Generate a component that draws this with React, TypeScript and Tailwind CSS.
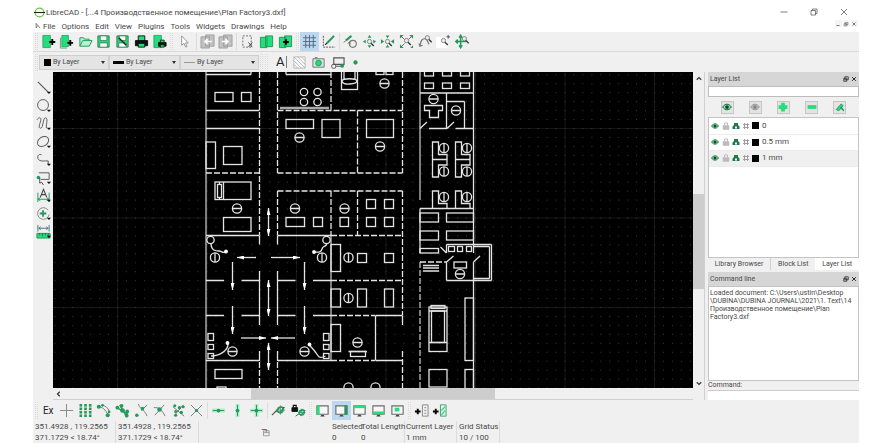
import { useState } from "react";
import type { ReactNode } from "react";
import clsx from "clsx";

const G = "#25dd7c";
const D = "#23995a";
const K = "#555";

// ---------- icons (16x16 grid) ----------

function Icon({ children, className = "size-[15px]" }: { children: ReactNode; className?: string }) {
  return (
    <svg viewBox="0 0 16 16" fill="none" stroke={K} className={clsx("block shrink-0", className)} aria-hidden="true">
      {children}
    </svg>
  );
}

const plus = (x: number, y: number, s = 3) => (
  <path d={`M${x - s} ${y}H${x + s}M${x} ${y - s}V${y + s}`} stroke="#000" strokeWidth="2" />
);
const lens = (x: number, y: number) => (
  <>
    <circle cx={x} cy={y} r="2.3" fill="#e6eeea" stroke="#777" strokeWidth=".9" />
    <path d={`M${x + 1.6} ${y + 1.8}L${x + 4.6} ${y + 4.8}`} stroke="#333" strokeWidth="1.4" />
  </>
);
const dot = (x: number, y: number, r = 1.8) => <circle cx={x} cy={y} r={r} fill={D} stroke="none" />;

const icons: Record<string, ReactNode> = {
  New: <><path d="M2 1.500h8v13H2z" fill={G} stroke={D} strokeWidth=".8" />{plus(12, 8.5, 3.2)}</>,
  "New from template": <><path d="M3 1.500h7v12H3z" fill={G} stroke={D} strokeWidth=".8" /><path d="M1.500 4v11h7" stroke={D} strokeWidth=".8" />{plus(12, 9.5, 3)}</>,
  Open: <path d="M2 13V4h4l1 1.500h5V7M2 13l3-6h10l-3 6z" fill="#b7f3d2" stroke={D} />,
  Save: <><path d="M2 2h12v12H2z" fill={G} stroke="#3b7657" /><path d="M4.500 2h7v5h-7zM4 9.500h8V14H4z" fill="#f3fff8" stroke="#3b7657" strokeWidth=".8" /></>,
  "Save as": <><path d="M2 2h12v12H2z" fill={G} stroke="#3b7657" /><path d="M4.500 2h7v5h-7zM4 9.500h8V14H4z" fill="#f3fff8" stroke="#3b7657" strokeWidth=".8" /><path d="M4 4l8 8" stroke="#222" strokeWidth="1.500" /></>,
  Print: <><path d="M4.500 2h7v5h-7z" fill={G} stroke="#111" /><path d="M1.500 7h13v5.500h-13z" fill="#111" stroke="#111" /><path d="M4.500 10h7v4h-7z" fill={G} stroke="#111" /></>,
  "Print preview": <><path d="M2 1.500h8v13H2z" fill={G} stroke={D} strokeWidth=".8" /><path d="M7 9h8v4H7z" fill="#111" stroke="#111" /><path d="M9 6.500h4V9H9zM9 11.500h4V14H9z" fill={G} stroke="#111" strokeWidth=".8" /></>,
  Select: <path d="M5 2v10l2.500-2 1.700 4 1.600-.8L9 9.500h3z" fill="#fff" stroke="#888" strokeWidth=".9" />,
  Undo: <><path d="M1 3h9v12H1zM6 1h9v12H6z" fill="#c2c2c2" stroke="#999" strokeWidth=".9" /><path d="M12.500 8H6M8 5.500L5.500 8 8 10.500" stroke="#fff" strokeWidth="1.800" /></>,
  Redo: <><path d="M1 3h9v12H1zM6 1h9v12H6z" fill="#c2c2c2" stroke="#999" strokeWidth=".9" /><path d="M4 8h6M8 5.500L10.500 8 8 10.500" stroke="#fff" strokeWidth="1.800" /></>,
  Cut: <><path d="M3 2h9v12H3z" strokeDasharray="2 1.500" stroke="#666" /><path d="M9 9l4 5M13 9l-4 5" stroke="#444" /></>,
  Copy: <path d="M1.500 3.500h7v11h-7zM7 2h7.500v11.500H7z" fill={G} stroke={D} />,
  Paste: <><path d="M1.500 3.500h7v11h-7zM7 2h7.500v11.500H7z" fill={G} stroke={D} />{plus(8.5, 8.5, 3)}</>,
  Grid: <path d="M4 1v14M8 1v14M12 1v14M1 4h14M1 8h14M1 12h14" stroke="#4b6076" strokeWidth=".9" />,
  Draft: <><path d="M2.500 2v12H15" stroke="#555" strokeDasharray="2 1" /><path d="M6.500 9.500L14 2" stroke={D} strokeWidth="2.200" /><path d="M4.500 11.500l2-2" stroke="#222" strokeWidth="1.300" /></>,
  Redraw: <><path d="M3 7l6-5" stroke={D} strokeWidth="2.200" /><path d="M1 9l2-2" /><circle cx="10.500" cy="10.500" r="3.700" stroke="#777" strokeWidth="1.200" /><path d="M5 10l2-1.500L8 11" stroke="#777" /></>,
  "Zoom in": <><path d="M8 1l2 3H6zM8 15l2-3H6zM1 8l3-2v4zM15 8l-3-2v4z" fill={D} stroke="none" />{lens(8, 8)}</>,
  "Zoom out": <><path d="M8 4.500l2-3H6zM8 11.500l2 3H6zM4.500 8L1 5.500v5zM11.500 8L15 5.500v5z" fill={D} stroke="none" />{lens(8, 8)}</>,
  "Auto zoom": <><path d="M2 2l4 4M14 2l-4 4M2 14l4-4" stroke="#666" /><path d="M1 1h4L1 5zM15 1v4l-4-4zM1 15v-4l4 4zM15 15h-3l3-3z" fill={D} stroke="none" />{lens(8, 7)}</>,
  "Previous view": <><path d="M2 13c1-4 1-8 5-8 4 0 3 5 5 6M1 10l1 3 3-1" stroke="#777" strokeWidth="1.200" />{lens(10, 4)}</>,
  "Window zoom": <><path d="M0 3h12v12H0z" fill="#fff" stroke="none" /><path d="M13 1v4M11 3h4" stroke="#333" strokeWidth=".8" />{lens(8, 7)}</>,
  Pan: <><path d="M6 2v12M1 8h11M4.500 4L6 1.500 7.500 4M4.500 12L6 14.500 7.500 12M3 6L1 8l2 2" stroke={D} strokeWidth="1.700" />{lens(10, 5)}</>,
  Hatch: <><path d="M2 2h12v12H2z" fill="#fafafa" stroke="#bbb" /><path d="M2 2l12 12M2 6l8 8M2 10l4 4M6 2l8 8M10 2l4 4" stroke="#999" strokeWidth=".7" /></>,
  Image: <><path d="M2 4h12v9H2z" fill="#d6e5dd" stroke="#777" /><circle cx="8" cy="8.500" r="3" fill={G} stroke={D} /><path d="M4 3h3" /></>,
  Block: <><path d="M4 3h11v7H4z" strokeWidth="1.200" /><circle cx="4" cy="12" r="2.300" />{dot(13, 11.5, 2)}<path d="M6 12h6" /></>,
  Point: dot(8, 8, 2.3),
  Line: <path d="M2 2l11 11" strokeWidth="1.200" />,
  Circle: <circle cx="7.500" cy="7.500" r="5.800" />,
  Curve: <path d="M1 4c2-3 5-3 4 1s-3 8 0 8 2-11 5-11 1 5 1 11" />,
  Ellipse: <ellipse cx="7.500" cy="8" rx="6.500" ry="4.800" transform="rotate(-35 7.500 8)" />,
  Polyline: <path d="M6 3C2 1 0 7 4 9c2 1 5 .500 9 .500V13" />,
  Modify: <><path d="M3 3h11v7H4" />{dot(2.5, 8)}<path d="M4 8v6l2-1 2 3" stroke="#444" fill="#fff" /></>,
  Dimension: <><path d="M2 5v10M14 5v10M2 12h12M4.500 10.500L2 12l2.500 1.500M11.500 10.500L14 12l-2.500 1.500" stroke={D} /><path d="M4.500 10L8 1.500l3.500 8.500M6 7h4" stroke="#444" strokeWidth="1.200" /></>,
  "Modify entity": <><path d="M13 4.500A6.200 6.200 0 1 0 14 9" stroke="#888" /><path d="M7.500 4.500v7M4 8h7" stroke={D} strokeWidth="1.900" /></>,
  Measure: <><path d="M2 1v7M14 1v7M3 4.500h10M5 3L3 4.500 5 6M11 3l2 1.500L11 6" stroke="#477" /><path d="M1 10h14v5H1z" fill={G} stroke={D} /><path d="M4 10v2M7 10v3M10 10v2M13 10v3" stroke="#143" strokeWidth=".7" /></>,
  "Free snap": <path d="M8 1v14M1 8h14" stroke="#888" />,
  "Snap grid": <>{[2.5, 6.2, 9.9, 13.6].map((y) => [3, 8, 13].map((x) => <rect key={`${x}-${y}`} x={x - 1.4} y={y - 1.4} width="2.800" height="2.800" fill={D} stroke="none" />))}</>,
  "Snap endpoint": <><path d="M2 4c5 0 8 3 11 9M6 2c4 1 7 3 8 7" stroke="#777" />{dot(3, 4, 2.2)}{dot(12.5, 13, 2.2)}{dot(7, 2.5, 1.4)}{dot(14, 9.5, 1.4)}</>,
  "Snap entity": <><path d="M2 5l12 7M5 2l7 12" stroke={D} strokeWidth="1.500" />{dot(2.5, 5, 2)}{dot(7, 3, 2)}{dot(8, 8, 2.5)}{dot(13, 9, 2)}{dot(12.5, 13.5, 2)}</>,
  "Snap center": <><path d="M5 1c0 5 5 4 9 13M14 2L8 8" stroke="#777" />{dot(3, 13, 1.9)}{dot(9, 6, 1.9)}</>,
  "Snap middle": <><path d="M2 5c5-1 9 3 12 9M13 2L3 13" stroke="#777" />{dot(8, 7, 2.4)}</>,
  "Snap distance": <><path d="M2 4l12 10M13 2L3 14" stroke="#777" />{dot(4, 3, 1.6)}{dot(9, 5, 1.8)}{dot(13, 4, 1.6)}{dot(5, 9, 1.6)}{dot(11, 10, 1.8)}{dot(5, 13, 1.6)}</>,
  "Snap intersection": <><path d="M2 2l12 12M14 2L2 14" stroke="#777" />{dot(8, 8, 1.7)}</>,
  "Restrict horizontal": <><path d="M1 8h14" stroke="#a5eec6" strokeWidth="4" /><path d="M2 8h12" stroke={D} />{dot(8, 8, 2)}</>,
  "Restrict vertical": <><path d="M8 1v14" stroke="#a5eec6" strokeWidth="4" /><path d="M8 2v12" stroke={D} />{dot(8, 8, 2)}</>,
  "Restrict orthogonal": <><path d="M1 8h14M8 1v14" stroke="#a5eec6" strokeWidth="4" /><path d="M2 8h12M8 2v12" stroke={D} />{dot(8, 8, 2)}</>,
  "Set relative zero": <><path d="M1 13l5-5 4-4 4 1-4 5-4-1" stroke="#555" strokeWidth="1.200" /><circle cx="10" cy="7.500" r="3" stroke={D} strokeWidth="1.300" /><path d="M10 2.500v10M5 7.500h10" stroke={D} strokeWidth=".8" /></>,
  "Lock relative zero": <><path d="M1 5h6v4H1z" fill="#111" stroke="#111" /><path d="M2.500 5V2.500h3V5" stroke="#111" strokeWidth="1.300" /><path d="M5 14l4-3 3-4 3 1-4 5-3-1" stroke="#555" /><circle cx="11.500" cy="10" r="2.700" stroke={D} strokeWidth="1.300" /><path d="M11.500 6v8M7.500 10h8" stroke={D} strokeWidth=".8" /></>,
};

const screen = (fill: ReactNode) => (
  <><path d="M2 3h12v9H2z" fill="#f7f7f7" stroke="#6b6b6b" strokeWidth="1.200" />{fill}<path d="M5.500 14.500h5L9 12.500H7z" fill="#444" stroke="none" /></>
);
icons["Left dock"] = screen(<path d="M2 2.500h3v10H2z" fill={G} stroke="none" />);
icons["Right dock"] = screen(<path d="M11 2.500h3v10h-3z" fill={D} stroke="none" />);
icons["Top dock"] = screen(<path d="M2 2.500h12v3H2z" fill={G} stroke="none" />);
icons["Bottom dock"] = screen(<path d="M2 9h12v3H2z" fill={G} stroke="none" />);
icons["Floating dock"] = screen(<path d="M5 5h5v4H5z" fill={G} stroke="none" />);
icons["Add list"] = <>{plus(4, 9, 3)}<path d="M9 2h6v12H9zM11 5h2M11 8h2M11 11h2" stroke="#888" /></>;
icons["Add toolbar"] = <>{plus(4, 9, 3)}<path d="M9 2h6v12H9z" stroke={D} strokeWidth=".9" /><path d="M10 8l4-4M10 13l4-5" stroke={G} strokeWidth="1.300" /></>;

function Tool({ name, active, children }: { name: string; active?: boolean; children?: ReactNode }) {
  return (
    <button
      type="button"
      title={name}
      aria-label={name}
      className={clsx("flex h-[19px] items-center justify-center", active ? "bg-[#bcd8f0]" : "hover:bg-[#dfe9f2]")}
    >
      {children ?? <Icon>{icons[name]}</Icon>}
    </button>
  );
}

function Group({ names, active, className }: { names: string[]; active?: string; className: string }) {
  return (
    <div className={clsx("grid shrink-0 auto-cols-fr grid-flow-col", className)}>
      {names.map((n) => (
        <Tool key={n} name={n} active={n === active}>
          {n === "Ex" ? <span className="text-[10px] text-[#222]">Ex</span> : undefined}
        </Tool>
      ))}
    </div>
  );
}

const Handle = () => <span className="mx-px h-[17px] w-[3px] shrink-0 border-x border-dotted border-[#dadada]" />;
const Sep = () => <span className="mx-px h-[17px] w-px shrink-0 bg-[#dcdcdc]" />;

function PenSelect({ label, className, swatch }: { label: string; className: string; swatch: string }) {
  return (
    <label className={clsx("flex h-[15px] shrink-0 items-center border border-[#cfcfcf] bg-[#e4e4e4] pl-[3px]", className)}>
      <span className={clsx("shrink-0", swatch)} />
      <select aria-label={label} className="min-w-0 flex-1 appearance-none bg-transparent pl-[2px] text-[7px] leading-[12px] outline-none">
        <option>By Layer</option>
      </select>
      <svg viewBox="0 0 4 3" className="mr-[3px] h-[3px] w-[4px]"><path d="M0 0h4L2 3z" fill="#333" /></svg>
    </label>
  );
}

// ---------- drawing ----------

// [x1, y1, x2, y2]
const walls = [
  [259.5, 235.5, 259.5, 244.5], [277.5, 235.5, 277.5, 244.5], [206, 110.5, 259.5, 110.5], [206, 128.5, 259.5, 128.5],
  [206, 235.5, 259.5, 235.5], [277.5, 235.5, 331, 235.5], [259.5, 271, 259.5, 325], [277.5, 271, 277.5, 325],
  [259.5, 351, 259.5, 361], [277.5, 351, 277.5, 361], [206, 360.5, 259.5, 360.5], [277.5, 360.5, 331, 360.5],
  [206, 280.5, 224, 280.5], [241.5, 280.5, 259.5, 280.5], [277.5, 280.5, 295.5, 280.5], [313, 280.5, 331, 280.5],
  [206, 315.5, 224, 315.5], [241.5, 315.5, 259.5, 315.5], [277.5, 315.5, 295.5, 315.5], [313, 315.5, 331, 315.5],
  [206, 74.5, 251, 74.5], [251, 72, 251, 74.5], [286, 74.5, 331, 74.5], [286, 72, 286, 74.5], [223.5, 182, 223.5, 199.5],
  [375.5, 315.5, 402.5, 315.5], [375.5, 315.5, 375.5, 360.5], [375.5, 360.5, 402.5, 360.5], [402.5, 315.5, 402.5, 325],
  [473.5, 72, 473.5, 253], [473.5, 262, 473.5, 388], [420, 93, 473.5, 93], [446.5, 93, 446.5, 128.5],
  [446.5, 101.5, 464.5, 101.5], [464.5, 101.5, 464.5, 128.5], [420, 128.5, 427, 122], [429, 128.5, 447, 128.5],
  [447, 128.5, 454, 122], [455.5, 128.5, 473.5, 128.5], [420, 208.5, 473.5, 208.5], [420, 208.5, 420, 253],
  [440.5, 247, 446.5, 253], [446.5, 262, 453.5, 256], [473.5, 262, 480, 256], [473.5, 246.5, 489.5, 246.5],
  [489.5, 246.5, 489.5, 278.5], [489.5, 278.5, 473.5, 278.5], [446.5, 244.5, 491.5, 244.5], [491.5, 244.5, 491.5, 280.5],
  [446.5, 280.5, 491.5, 280.5], [446.5, 244.5, 446.5, 253], [446.5, 262, 446.5, 280.5],
  [423, 265.5, 439, 265.5], [423, 268, 439, 268], [423, 271, 439, 271],
  [429, 311, 447, 311], [429, 342.5, 447, 342.5], [348.5, 351.5, 367, 351.5], [219.5, 182, 219.5, 185], [219.5, 197, 219.5, 199],
];

const dashed = [
  [259.5, 72, 259.5, 235], [277.5, 72, 277.5, 173], [277.5, 191, 277.5, 235], [206, 173, 259.5, 173],
  [277.5, 110.5, 402.5, 110.5], [277.5, 173, 402.5, 173], [277.5, 191, 402.5, 191], [331, 72, 331, 110.5],
  [357.5, 110.5, 357.5, 173], [402.5, 72, 402.5, 173], [402.5, 191, 402.5, 315], [331, 191, 331, 235], [357.5, 191, 357.5, 235],
  [331, 235.5, 402.5, 235.5], [331, 280.5, 402.5, 280.5], [331, 315.5, 375, 315.5], [331, 360.5, 375, 360.5],
  [402.5, 351, 402.5, 388], [259.5, 362, 259.5, 388], [277.5, 362, 277.5, 388], [420, 262, 446.5, 262],
];

// left, top, right, bottom
const boxes = [
  [215, 92.5, 233, 101.5], [241.5, 92.5, 251, 101.5], [206, 142, 215.5, 168.5], [223.5, 146.5, 242, 164.5],
  [215, 182, 251, 199.5], [217.5, 184.5, 221.5, 197.5], [223.5, 217.5, 251, 231.5], [341.5, 70, 357.5, 89.5],
  [286, 119.5, 313.5, 128.5], [322, 119.5, 340, 137.5], [366.5, 119.5, 393.5, 137.5],
  [286, 217.5, 304.5, 226.5], [313.5, 217.5, 322.5, 226.5], [340, 217.5, 348.5, 226.5],
  [366.5, 199.5, 375.5, 208.5], [384.5, 199.5, 393.5, 208.5], [366.5, 217.5, 375.5, 226.5], [384.5, 217.5, 393.5, 226.5],
  [376, 70, 384, 74.5], [386, 70, 393, 74.5],
  [424.5, 70, 433.5, 76], [442.5, 70, 451.5, 76], [460.5, 70, 469.5, 76],
  [424.5, 83, 433.5, 88.5], [442.5, 83, 451.5, 88.5], [460.5, 83, 469.5, 88.5],
  [420, 213, 438.5, 222], [446.5, 213, 473.5, 222], [420, 231, 438.5, 240], [446.5, 231, 473.5, 240], [420, 248.5, 438.5, 253],
  [448.5, 246.5, 454.5, 251.5], [457.5, 246.5, 462.5, 251.5], [466.5, 246.5, 471.5, 251.5], [454, 262, 466.5, 268],
  [429, 307, 447, 351.5], [431.5, 311, 444.5, 342.5], [431, 305.5, 445, 308.5],
  [465, 298, 473.5, 360.5], [465, 369.5, 473.5, 390], [429, 369.5, 447, 387],
  [331, 244.5, 340.5, 271.5], [331, 289, 340.5, 307], [331, 324.5, 340.5, 351.5],
  [357.5, 253.5, 366.5, 262.5], [384.5, 253.5, 393.5, 262.5], [357.5, 289, 366.5, 307], [384.5, 289, 393.5, 307],
  [350.5, 351.5, 365.5, 356.5], [215, 369.5, 242, 378.5], [217, 387, 226, 390],
  [208, 333.5, 213.5, 340.5], [208, 344.5, 213.5, 349.5], [208, 353.5, 213.5, 358.5],
  [323.5, 333.5, 329, 340.5], [323.5, 344.5, 329, 349.5], [323.5, 353.5, 329, 358.5],
];

const seats = [
  [237, 208.5], [299.5, 137.5], [295, 208.5], [344.5, 208.5], [384.5, 83.5], [380, 146.5], [433.5, 99], [456, 110.5],
  [460, 274], [357.5, 342.5], [232.5, 351.5], [304.5, 351.5],
];
const seatsV = [
  [444, 148], [467, 148], [444, 171.5], [467, 171.5], [444, 197], [467, 197], [215, 257.5], [322, 257.5], [348.5, 257.5], [348.5, 298],
];
const rings = [[304, 92], [317.5, 92], [304, 102], [317.5, 102], [210.5, 240], [326.5, 240], [348.5, 387.5], [375.5, 387.5]];

const arrows = [
  [256, 257.5, 237, 257.5], [271, 257.5, 300, 257.5], [232.5, 262, 232.5, 290], [304.5, 262, 304.5, 290],
  [232.5, 306, 232.5, 334], [304.5, 306, 304.5, 334], [241, 338, 266, 338], [295, 338, 271, 338],
  [268.5, 222, 268.5, 208], [268.5, 222, 268.5, 236], [268.5, 298, 268.5, 280], [268.5, 298, 268.5, 316],
  [268.5, 356, 268.5, 343], [268.5, 356, 268.5, 370],
];

const toPath = (lines: number[][]) => lines.map(([a, b, c, d]) => `M${a} ${b}L${c} ${d}`).join("");

function Plan() {
  return (
    <svg className="block min-h-0 w-full min-w-0 flex-1 bg-black" role="img" aria-label="Plan Factory3">
      <defs>
        <pattern id="dots" x="117" y="128" width="8.950" height="8.950" patternUnits="userSpaceOnUse">
          <rect width="1" height="1" fill="#3a3a3a" />
        </pattern>
        <pattern id="meta" x="117" y="128" width="89.500" height="89.500" patternUnits="userSpaceOnUse">
          <path d="M.5 0V90M0 .5H90" stroke="#161616" />
        </pattern>
        <marker id="tip" viewBox="0 0 7 4" refX="7" refY="2" markerWidth="7" markerHeight="4" orient="auto" markerUnits="userSpaceOnUse">
          <path d="M0 0l7 2-7 2z" fill="#fff" />
        </marker>
      </defs>
      <g transform="translate(-53 -72)" fill="none" stroke="#e4e4e4" strokeWidth="1.300">
        <rect x="53" y="72" width="100%" height="100%" fill="url(#meta)" stroke="none" />
        <rect x="53" y="72" width="100%" height="100%" fill="url(#dots)" stroke="none" />
        <path d="M206 72V388M331 235V361M420 72V200" stroke="#a6a6a6" strokeWidth="1.500" />
        <path d="M420 262V388" stroke="#a6a6a6" strokeWidth="1.500" strokeDasharray="6 2" />
        <path d="M280 108H329" stroke="#aaa" strokeWidth="2.600" />
        <path d={toPath(walls)} />
        <path d={toPath(dashed)} strokeDasharray="6 2" />
        {boxes.map(([l, t, r, b]) => (
          <rect key={`${l}-${t}`} x={l} y={t} width={r - l} height={b - t} />
        ))}
        {[...seats, ...seatsV].map(([x, y]) => <circle key={`${x}-${y}`} cx={x} cy={y} r="4.600" />)}
        <path d={seats.map(([x, y]) => `M${x - 4.6} ${y}h9.200`).join("") + seatsV.map(([x, y]) => `M${x} ${y - 4.6}v9.200`).join("")} />
        {rings.map(([x, y]) => <circle key={`${x}-${y}`} cx={x} cy={y} r={y > 380 ? 4.6 : 3.7} />)}
        {arrows.map(([a, b, c, d]) => <path key={`${a}-${b}-${c}-${d}`} d={`M${a} ${b}L${c} ${d}`} markerEnd="url(#tip)" />)}
        {[0, 23].map((dx) => (
          <path
            key={dx}
            transform={`translate(${dx})`}
            d="M432.500 142h6v12.500h8.500v10.500h-8.500v12h-6zM432.500 159.500h14.500M432.500 208v-17h6v12.500h8.500v4.500"
          />
        ))}
        <path d="M424.500 105.500h18v5h-4v7h-9v-7h-5z" />
        <path d="M344 72v7M355 72v7M342 81c0-3 15-3 15 0s-15 5-15 0" />
        {/* hoses */}
        <path d="M211 243c0 8 5 8 8 8s4 3 7 .500M327 243c-1 5-4 2-5 6s-4 3-8 3M211 356c8 0 17-5 17-12M309.500 345c3 4 5 5 8 10 2 4 5 2 8 1" />
        <g fill="#fff" stroke="none">
          <circle cx="226" cy="251.500" r="1.900" />
          <circle cx="314" cy="252" r="1.900" />
          <circle cx="227.500" cy="343" r="1.900" />
          <circle cx="309.500" cy="344.500" r="1.900" />
        </g>
      </g>
    </svg>
  );
}

// ---------- docks ----------

const Eye = ({ off, className }: { off?: boolean; className?: string }) => (
  <Icon className={className}>
    <path d="M1 8c4-6 10-6 14 0-4 6-10 6-14 0z" fill={off ? "#bbb" : "#8fd8b0"} stroke={off ? "#999" : "#176b3c"} strokeWidth="1.600" />
    <circle cx="8" cy="8" r="3" fill={off ? "#888" : "#0d4a28"} stroke="none" />
  </Icon>
);

function DockTitle({ children }: { children: ReactNode }) {
  return (
    <div className="flex h-[14px] shrink-0 items-center bg-[#d6d6d6] pl-[2px] pr-px">
      <h2 className="flex-1">{children}</h2>
      <button type="button" aria-label="Float" className="flex size-2 items-center justify-center">
        <Icon className="size-[6px]"><path d="M5 2h9v8H5zM2 6h8v8H2z" stroke="#222" strokeWidth="2" /></Icon>
      </button>
      <button type="button" aria-label="Close" className="flex size-2 items-center justify-center">
        <Icon className="size-[6px]"><path d="M3 3l10 10M13 3L3 13" stroke="#222" strokeWidth="2.500" /></Icon>
      </button>
    </div>
  );
}

const layerActions: [string, ReactNode][] = [
  ["Show all layers", <Eye className="size-[10px]" />],
  ["Hide all layers", <Eye off className="size-[10px]" />],
  ["Add layer", <Icon className="size-[10px]"><path d="M8 1v14M1 8h14" stroke={G} strokeWidth="6" /></Icon>],
  ["Remove layer", <Icon className="size-[10px]"><path d="M1 8h14" stroke={G} strokeWidth="6" /></Icon>],
  ["Modify layer", <Icon className="size-[10px]"><path d="M2 12L10 3l3 3-7 8z" stroke={D} strokeWidth="1.500" fill={G} /><path d="M9 8l5 6" stroke={D} strokeWidth="2.500" /></Icon>],
];

function LayerDock() {
  const [selected, setSelected] = useState("1 mm");
  const [filter, setFilter] = useState("");
  return (
    <section className="flex min-h-0 flex-1 flex-col">
      <DockTitle>Layer List</DockTitle>
      <input
        aria-label="Filter layers"
        value={filter}
        onChange={(e) => setFilter(e.target.value)}
        className="h-[11px] shrink-0 border border-[#bdbdbd] bg-white px-[2px] outline-none"
      />
      <div className="flex h-5 shrink-0 items-center justify-around px-[5px]">
        {layerActions.map(([label, icon]) => (
          <button key={label} type="button" aria-label={label} className="flex size-[13px] items-center justify-center border border-[#c6c6c6] bg-[#e3e3e3]">
            {icon}
          </button>
        ))}
      </div>
      <div className="min-h-0 flex-1 border border-[#c4c4c4] bg-white">
        <table className="w-full border-collapse">
          <tbody>
            {["0", "0.5 mm", "1 mm"].filter((n) => n.includes(filter)).map((name) => (
              <tr key={name} onClick={() => setSelected(name)} className={clsx("h-4 border-b border-[#ececec]", selected === name && "bg-[#f0f0f0]")}>
                <td className="w-3 pl-[2px]"><Eye className="size-2" /></td>
                <td className="w-[10px] pl-px">
                  <Icon className="size-2"><path d="M2 7h12v8H2z" fill="#bbb" stroke="#bbb" /><path d="M5 7V2h6v5" stroke="#bbb" strokeWidth="2" /></Icon>
                </td>
                <td className="w-[10px] pl-px">
                  <Icon className="size-2"><path d="M4 2h8v4l3 3v5H1V9l3-3z" fill="#1d7a46" stroke="none" /><path d="M6 9h4v4H6z" fill="#fff" stroke="none" /></Icon>
                </td>
                <td className="w-[10px] pl-px">
                  <Icon className="size-2"><path d="M5 2v12M11 2v12M2 5h12M2 11h12" stroke="#999" strokeWidth="1.800" /></Icon>
                </td>
                <td className="w-[11px] pl-px"><span className="block size-[7px] bg-black" /></td>
                <td className="text-[8px] leading-[12px]">{name}</td>
              </tr>
            ))}
          </tbody>
        </table>
      </div>
      <div className="flex h-3 shrink-0 text-center" role="tablist">
        <button type="button" role="tab" className="flex-auto border-r border-[#d0d0d0]">Library Browser</button>
        <button type="button" role="tab" className="flex-auto">Block List</button>
        <button type="button" role="tab" aria-selected="true" className="flex-auto bg-white">Layer List</button>
      </div>
    </section>
  );
}

function CommandDock() {
  return (
    <section className="flex h-32 shrink-0 flex-col">
      <DockTitle>Command line</DockTitle>
      <div className="min-h-0 flex-1 border border-[#c4c4c4] bg-white px-px py-[2px] leading-[8px]">
        Loaded document: C:\Users\ustin\Desktop<br />
        \DUBINA\DUBINA JOURNAL\2021\1. Text\14<br />
        Производственное помещение\Plan<br />
        Factory3.dxf
      </div>
      <label htmlFor="command" className="h-[9px] shrink-0 leading-[9px]">Command:</label>
      <input id="command" className="h-[10px] shrink-0 border-t border-[#ccc] bg-white px-[2px] outline-none" />
    </section>
  );
}

const Chevron = ({ d }: { d: string }) => (
  <svg viewBox="0 0 8 8" className="block size-[6px]" fill="none" stroke="#333" strokeWidth="1.600"><path d={d} /></svg>
);

function Readout({ top, bottom, className }: { top: string; bottom: string; className: string }) {
  return (
    <div className={clsx("shrink-0 whitespace-nowrap", className)}>
      <div>{top}</div>
      <div>{bottom}</div>
    </div>
  );
}

const drawTools = ["Line", "Circle", "Curve", "Ellipse", "Polyline", "Modify", "Dimension", "Modify entity", "Measure"];

export default function App() {
  return (
    <div className="h-screen bg-white px-[33px] font-[Roboto,'Noto_Sans',sans-serif] text-[8px] leading-[11px] text-[#484848]">
      <div className="flex h-full flex-col bg-[#f0f0f0]">
        <header className="shrink-0 bg-white">
          <div className="flex h-5 items-center pt-[4px]">
            <svg viewBox="0 0 12 12" className="ml-px size-[11px]" fill="none">
              <circle cx="6" cy="6" r="4.800" stroke="#62c744" strokeWidth="1.300" />
              <path d="M0 6h12" stroke="#222" strokeWidth="1.200" />
            </svg>
            <h1 className="flex-1 pl-px">LibreCAD - [...4 Производственное помещение\Plan Factory3.dxf]</h1>
            <div className="flex items-center gap-[22px] pr-[11px]">
              <button type="button" aria-label="Minimize"><Icon className="size-2"><path d="M1 8h14" strokeWidth="1.500" /></Icon></button>
              <button type="button" aria-label="Restore"><Icon className="size-2"><path d="M2 5h9v9H2zM5 5V2h9v9h-3" strokeWidth="1.500" /></Icon></button>
              <button type="button" aria-label="Close"><Icon className="size-2"><path d="M2 2l12 12M14 2L2 14" strokeWidth="1.500" /></Icon></button>
            </div>
          </div>
          <div className="flex h-3 items-center">
            <Icon className="ml-[2px] size-[6px]"><path d="M3 1l10 12M3 1v12l4-4" stroke="#555" strokeWidth="2" /></Icon>
            <nav className="flex flex-1 gap-[6px] pl-[2px]">
              {["File", "Options", "Edit", "View", "Plugins", "Tools", "Widgets", "Drawings", "Help"].map((m) => (
                <button key={m} type="button">{m}</button>
              ))}
            </nav>
            <div className="flex self-start gap-px pr-px">
              <button type="button" aria-label="Minimize document" className="size-[7px] bg-[#f4f4f4]"><Icon className="size-[6px]"><path d="M4 12h8" strokeWidth="2" /></Icon></button>
              <button type="button" aria-label="Restore document" className="size-[7px] bg-[#f4f4f4]"><Icon className="size-[6px]"><path d="M6 4h7v6H6zM3 7h7v6H3z" strokeWidth="1.500" /></Icon></button>
              <button type="button" aria-label="Close document" className="size-[7px] bg-[#f4f4f4]"><Icon className="size-[6px]"><path d="M4 4l8 8M12 4l-8 8" strokeWidth="2" /></Icon></button>
            </div>
          </div>
        </header>

        <div className="flex h-5 shrink-0 items-center border-b border-[#d9d9d9] pl-px">
          <Handle />
          <Group className="w-[130px]" names={["New", "New from template", "Open", "Save", "Save as", "Print", "Print preview"]} />
          <Handle />
          <Group className="w-[21px]" names={["Select"]} />
          <Sep />
          <Group className="w-[37px]" names={["Undo", "Redo"]} />
          <Sep />
          <Group className="w-[57px]" names={["Cut", "Copy", "Paste"]} />
          <Handle />
          <Group className="w-[38px]" names={["Grid", "Draft"]} active="Grid" />
          <Sep />
          <Group className="w-[131px]" names={["Redraw", "Zoom in", "Zoom out", "Auto zoom", "Previous view", "Window zoom", "Pan"]} />
        </div>

        <div className="flex h-5 shrink-0 items-center pl-px">
          <Handle />
          <PenSelect label="Pen colour" className="w-[70px]" swatch="ml-px size-[7px] bg-black" />
          <PenSelect label="Pen width" className="w-[71px]" swatch="h-[3px] w-[11px] bg-black" />
          <PenSelect label="Line type" className="w-[79px]" swatch="h-px w-[11px] bg-[#999]" />
          <Handle />
          <Handle />
          <div className="ml-[3px] grid w-[93px] shrink-0 grid-cols-5">
            <Tool name="Text">
              <span className="border-r border-[#777] pr-px text-[13px] leading-[12px] text-[#222]">A</span>
            </Tool>
            {["Hatch", "Image", "Block", "Point"].map((n) => <Tool key={n} name={n} />)}
          </div>
        </div>

        <main className="flex min-h-0 flex-1 text-[7px]">
          <div className="flex w-5 shrink-0 flex-col pt-[6px]">
            {drawTools.map((n) => (
              <button key={n} type="button" title={n} aria-label={n} className="flex h-[18px] items-center justify-center">
                <Icon>
                  {icons[n]}
                  <path d="M11.500 12.500h4.500L13.800 15z" fill="#111" stroke="none" />
                </Icon>
              </button>
            ))}
          </div>
          <div className="flex min-w-0 flex-1 flex-col">
            <Plan />
            <div className="flex h-3 shrink-0 border-b border-[#d0d0d0] bg-[#f0f0f0]">
              <div className="flex w-[31%] items-center pl-[3px]"><Chevron d="M5 1L2 4l3 3" /></div>
              <div className="w-[38%] bg-[#cdcdcd]" />
            </div>
          </div>
          <div className="mr-[3px] flex w-3 shrink-0 flex-col items-center border-r border-[#d0d0d0] pb-[14px]">
            <div className="flex h-[39%] items-start pt-1"><Chevron d="M1 5l3-3 3 3" /></div>
            <div className="h-[30%] w-full bg-[#cdcdcd]" />
            <div className="flex flex-1 items-end"><Chevron d="M1 3l3 3 3-3" /></div>
          </div>
          <aside className="flex w-[151px] shrink-0 flex-col gap-[2px]">
            <LayerDock />
            <CommandDock />
          </aside>
        </main>

        <div className="flex h-[21px] shrink-0 items-center pl-px">
          <Handle />
          <Group
            className="w-[167px]"
            names={["Ex", "Free snap", "Snap grid", "Snap endpoint", "Snap entity", "Snap center", "Snap middle", "Snap distance", "Snap intersection"]}
          />
          <Sep />
          <Group className="w-[57px]" names={["Restrict horizontal", "Restrict vertical", "Restrict orthogonal"]} />
          <Sep />
          <Group className="w-[39px]" names={["Set relative zero", "Lock relative zero"]} />
          <Handle />
          <Group className="w-[94px]" names={["Left dock", "Right dock", "Top dock", "Bottom dock", "Floating dock"]} active="Right dock" />
          <Handle />
          <Group className="w-[37px]" names={["Add list", "Add toolbar"]} />
        </div>

        <footer className="flex h-[22px] shrink-0 pl-[2px]">
          <Readout className="w-[81px] border-r border-[#dcdcdc]" top="351.4928 , 119.2565" bottom="371.1729 < 18.74°" />
          <Readout className="w-[83px] border-r border-[#dcdcdc] pl-[2px]" top="351.4928 , 119.2565" bottom="371.1729 < 18.74°" />
          <div className="flex w-[133px] shrink-0 items-center justify-center">
            <Icon className="size-[10px]"><path d="M4 6h9v8H4zM4 9h9M8 6v3" stroke="#777" /><path d="M1 4h8v3" stroke={D} strokeWidth="1.500" /></Icon>
          </div>
          <Readout className="w-[29px]" top="Selected" bottom="0" />
          <Readout className="w-[44px] border-r border-[#dcdcdc]" top="Total Length" bottom="0" />
          <Readout className="w-[52px] border-r border-[#dcdcdc] pl-px" top="Current Layer" bottom="1 mm" />
          <Readout className="w-[43px] border-r border-[#dcdcdc] pl-[2px]" top="Grid Status" bottom="10 / 100" />
        </footer>
      </div>
    </div>
  );
}
